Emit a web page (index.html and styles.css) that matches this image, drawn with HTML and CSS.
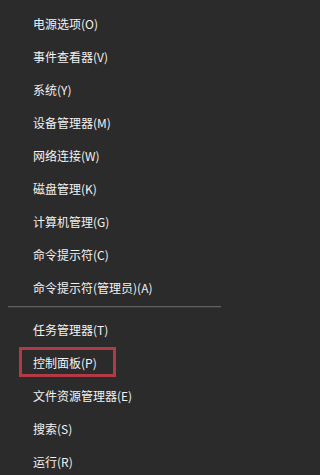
FILE: index.html
```html
<!DOCTYPE html>
<html lang="zh-CN">
<head>
<meta charset="utf-8">
<title>菜单</title>
<link rel="stylesheet" href="styles.css">
</head>
<body>
<div class="menu">
  <ul class="group">
    <li class="item">电源选项(O)</li>
    <li class="item">事件查看器(V)</li>
    <li class="item">系统(Y)</li>
    <li class="item">设备管理器(M)</li>
    <li class="item">网络连接(W)</li>
    <li class="item">磁盘管理(K)</li>
    <li class="item">计算机管理(G)</li>
    <li class="item">命令提示符(C)</li>
    <li class="item">命令提示符(管理员)(A)</li>
  </ul>
  <div class="sep"></div>
  <ul class="group">
    <li class="item">任务管理器(T)</li>
    <li class="item marked">控制面板(P)</li>
    <li class="item">文件资源管理器(E)</li>
    <li class="item">搜索(S)</li>
    <li class="item">运行(R)</li>
  </ul>
</div>
</body>
</html>
```

FILE: styles.css
```css
html, body {
  margin: 0;
  padding: 0;
  background: #2b2b2b;
}
.menu {
  width: 227px;
  height: 475px;
  padding-top: 7px;
  box-sizing: border-box;
  font-family: "Noto Sans CJK SC", "Noto Sans", sans-serif;
  font-size: 12px;
  color: #f2f2f2;
}
.group {
  list-style: none;
  margin: 0;
  padding: 0;
}
.item {
  height: 33px;
  line-height: 33px;
  padding-left: 33px;
  white-space: nowrap;
}
.sep {
  height: 1px;
  margin: 2px 6px 6px 8px;
  background: #5e5e5e;
  box-shadow: 0 1px 0 #3a3a3a;
}
.marked {
  position: relative;
}
.marked::before {
  content: "";
  position: absolute;
  left: 19px;
  top: 1px;
  width: 97px;
  height: 30px;
  border: 3px solid #b23a45;
  box-sizing: border-box;
}
```
